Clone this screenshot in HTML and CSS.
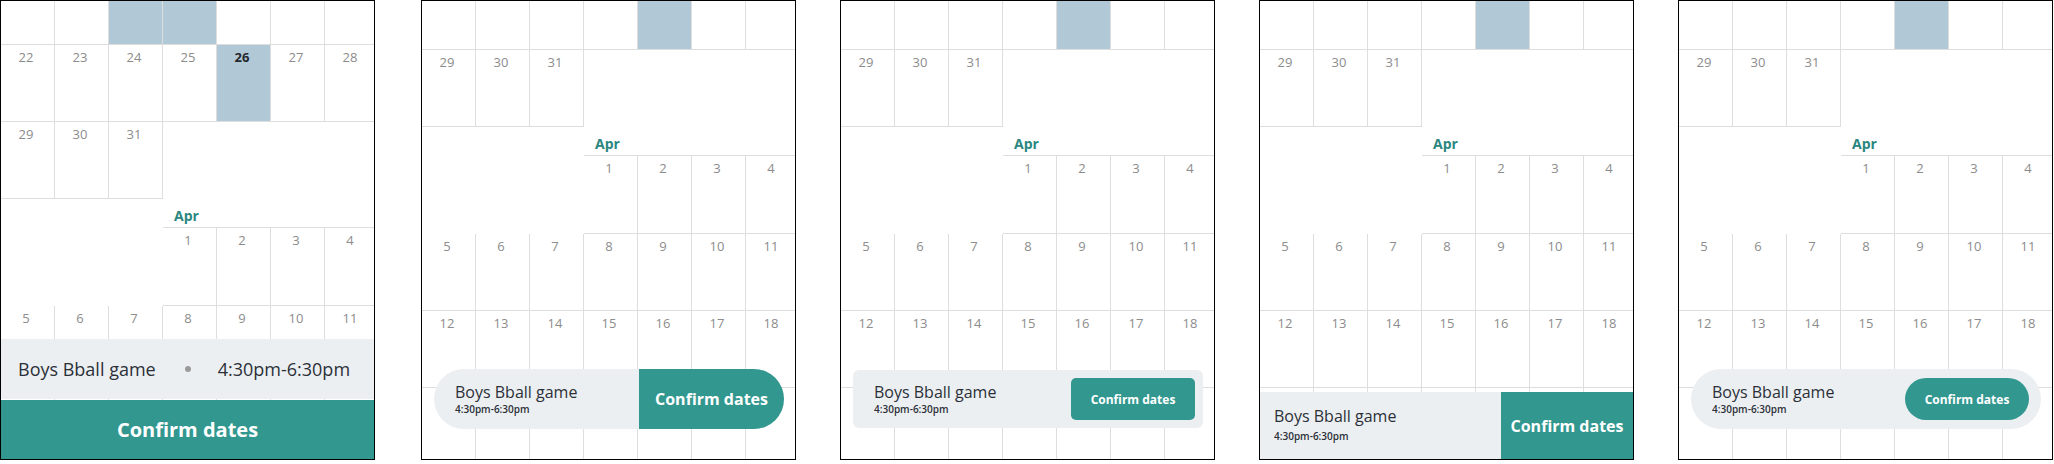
FILE: index.html
```html
<!DOCTYPE html>
<html lang="en">
<head>
<meta charset="utf-8">
<title>Confirm dates variants</title>
<link rel="stylesheet" href="styles.css">
</head>
<body>
<div class="board">

  <!-- Panel 1 -->
  <section class="panel panel--first">
    <div class="cal cal--deep">
      <div class="day"></div><div class="day"></div><div class="day day--sel"></div><div class="day day--sel"></div><div class="day"></div><div class="day"></div><div class="day"></div>
      <div class="day">22</div><div class="day">23</div><div class="day">24</div><div class="day">25</div><div class="day day--sel day--today">26</div><div class="day">27</div><div class="day">28</div>
      <div class="day">29</div><div class="day">30</div><div class="day">31</div><div></div><div></div><div></div><div></div>
      <div class="month-label">Apr</div>
      <div></div><div></div><div></div><div class="day day--first">1</div><div class="day day--first">2</div><div class="day day--first">3</div><div class="day day--first">4</div>
      <div class="day">5</div><div class="day">6</div><div class="day">7</div><div class="day">8</div><div class="day">9</div><div class="day">10</div><div class="day">11</div>
      <div class="day"></div><div class="day"></div><div class="day"></div><div class="day"></div><div class="day"></div><div class="day"></div><div class="day"></div>
    </div>
    <div class="stack">
      <div class="info-bar">
        <span class="info-name">Boys Bball game</span>
        <span class="info-dot"></span>
        <span class="info-time">4:30pm-6:30pm</span>
      </div>
      <div class="confirm-bar">Confirm dates</div>
    </div>
  </section>

  <!-- Panel 2 -->
  <section class="panel">
    <div class="cal cal--mid">
      <div class="day"></div><div class="day"></div><div class="day"></div><div class="day"></div><div class="day day--sel"></div><div class="day"></div><div class="day"></div>
      <div class="day">29</div><div class="day">30</div><div class="day">31</div><div></div><div></div><div></div><div></div>
      <div class="month-label">Apr</div>
      <div></div><div></div><div></div><div class="day day--first">1</div><div class="day day--first">2</div><div class="day day--first">3</div><div class="day day--first">4</div>
      <div class="day">5</div><div class="day">6</div><div class="day">7</div><div class="day">8</div><div class="day">9</div><div class="day">10</div><div class="day">11</div>
      <div class="day">12</div><div class="day">13</div><div class="day">14</div><div class="day">15</div><div class="day">16</div><div class="day">17</div><div class="day">18</div>
      <div class="day"></div><div class="day"></div><div class="day"></div><div class="day"></div><div class="day"></div><div class="day"></div><div class="day"></div>
    </div>
    <div class="card card--pill">
      <div class="event">
        <div class="event-name">Boys Bball game</div>
        <div class="event-time">4:30pm-6:30pm</div>
      </div>
      <div class="confirm-seg">Confirm dates</div>
    </div>
  </section>

  <!-- Panel 3 -->
  <section class="panel">
    <div class="cal cal--mid">
      <div class="day"></div><div class="day"></div><div class="day"></div><div class="day"></div><div class="day day--sel"></div><div class="day"></div><div class="day"></div>
      <div class="day">29</div><div class="day">30</div><div class="day">31</div><div></div><div></div><div></div><div></div>
      <div class="month-label">Apr</div>
      <div></div><div></div><div></div><div class="day day--first">1</div><div class="day day--first">2</div><div class="day day--first">3</div><div class="day day--first">4</div>
      <div class="day">5</div><div class="day">6</div><div class="day">7</div><div class="day">8</div><div class="day">9</div><div class="day">10</div><div class="day">11</div>
      <div class="day">12</div><div class="day">13</div><div class="day">14</div><div class="day">15</div><div class="day">16</div><div class="day">17</div><div class="day">18</div>
      <div class="day"></div><div class="day"></div><div class="day"></div><div class="day"></div><div class="day"></div><div class="day"></div><div class="day"></div>
    </div>
    <div class="card card--box">
      <div class="event">
        <div class="event-name">Boys Bball game</div>
        <div class="event-time">4:30pm-6:30pm</div>
      </div>
      <div class="btn btn--box">Confirm dates</div>
    </div>
  </section>

  <!-- Panel 4 -->
  <section class="panel">
    <div class="cal cal--mid">
      <div class="day"></div><div class="day"></div><div class="day"></div><div class="day"></div><div class="day day--sel"></div><div class="day"></div><div class="day"></div>
      <div class="day">29</div><div class="day">30</div><div class="day">31</div><div></div><div></div><div></div><div></div>
      <div class="month-label">Apr</div>
      <div></div><div></div><div></div><div class="day day--first">1</div><div class="day day--first">2</div><div class="day day--first">3</div><div class="day day--first">4</div>
      <div class="day">5</div><div class="day">6</div><div class="day">7</div><div class="day">8</div><div class="day">9</div><div class="day">10</div><div class="day">11</div>
      <div class="day">12</div><div class="day">13</div><div class="day">14</div><div class="day">15</div><div class="day">16</div><div class="day">17</div><div class="day">18</div>
      <div class="day"></div><div class="day"></div><div class="day"></div><div class="day"></div><div class="day"></div><div class="day"></div><div class="day"></div>
    </div>
    <div class="dock">
      <div class="event event--dock">
        <div class="event-name">Boys Bball game</div>
        <div class="event-time">4:30pm-6:30pm</div>
      </div>
      <div class="confirm-seg confirm-seg--dock">Confirm dates</div>
    </div>
  </section>

  <!-- Panel 5 -->
  <section class="panel">
    <div class="cal cal--mid">
      <div class="day"></div><div class="day"></div><div class="day"></div><div class="day"></div><div class="day day--sel"></div><div class="day"></div><div class="day"></div>
      <div class="day">29</div><div class="day">30</div><div class="day">31</div><div></div><div></div><div></div><div></div>
      <div class="month-label">Apr</div>
      <div></div><div></div><div></div><div class="day day--first">1</div><div class="day day--first">2</div><div class="day day--first">3</div><div class="day day--first">4</div>
      <div class="day">5</div><div class="day">6</div><div class="day">7</div><div class="day">8</div><div class="day">9</div><div class="day">10</div><div class="day">11</div>
      <div class="day">12</div><div class="day">13</div><div class="day">14</div><div class="day">15</div><div class="day">16</div><div class="day">17</div><div class="day">18</div>
      <div class="day"></div><div class="day"></div><div class="day"></div><div class="day"></div><div class="day"></div><div class="day"></div><div class="day"></div>
    </div>
    <div class="card card--round">
      <div class="event">
        <div class="event-name">Boys Bball game</div>
        <div class="event-time">4:30pm-6:30pm</div>
      </div>
      <div class="btn btn--round">Confirm dates</div>
    </div>
  </section>

</div>
</body>
</html>
```

FILE: styles.css
```css
* { box-sizing: border-box; }

html, body {
  margin: 0;
  padding: 0;
  background: #ffffff;
}

body {
  font-family: "Open Sans", "Noto Sans", sans-serif;
  color: #2b3038;
}

.board {
  display: flex;
  gap: 44px;
  align-items: flex-start;
}

.panel {
  position: relative;
  flex: 0 0 375px;
  width: 375px;
  height: 460px;
  border: 1px solid #000000;
  overflow: hidden;
  background: #ffffff;
}

.panel--first {
  margin-right: 2px;
}

/* calendar grid */
.cal {
  display: grid;
  grid-template-columns: repeat(7, 54px);
  width: 378px;
}

.cal--deep { margin-top: -33px; }
.cal--mid  { margin-top: -28px; }

.day {
  height: 77px;
  border-right: 1px solid #dedede;
  border-bottom: 1px solid #dedede;
  padding: 4px 3px 0 0;
  text-align: center;
  font-size: 13px;
  line-height: 16px;
  color: #8c8c8c;
}

.day--first {
  height: 79px;
  border-top: 1px solid #dedede;
}

.day--sel {
  background: #b1c9d7;
}

.day--today {
  font-weight: 700;
  color: #24272c;
}

.month-label {
  grid-column: 4 / -1;
  height: 28px;
  padding: 8px 0 0 11px;
  font-size: 14px;
  line-height: 18px;
  font-weight: 700;
  color: #2a8680;
}

/* shared event text */
.event {
  flex: 1;
  display: flex;
  flex-direction: column;
  justify-content: center;
  padding-left: 21px;
}

.event-name {
  font-size: 16px;
  line-height: 20px;
  color: #2b3038;
}

.event-time {
  font-size: 10px;
  line-height: 14px;
  font-weight: 600;
  color: #2b3038;
}

/* panel 1: stacked bars */
.stack {
  position: absolute;
  left: 0;
  right: 0;
  bottom: 0;
  display: flex;
  flex-direction: column;
  gap: 1px;
}

.info-bar {
  height: 60px;
  display: flex;
  align-items: center;
  padding-left: 17px;
  background: #eceff2;
  font-size: 18px;
  line-height: 24px;
  color: #2b3038;
}

.info-dot {
  width: 6px;
  height: 6px;
  border-radius: 50%;
  background: #9a9a9a;
  margin: 0 27px 0 29px;
}

.confirm-bar {
  height: 59px;
  display: flex;
  align-items: center;
  justify-content: center;
  background: #31978f;
  color: #ffffff;
  font-size: 20px;
  font-weight: 700;
}

/* floating cards */
.card {
  position: absolute;
  left: 12px;
  width: 350px;
  display: flex;
  align-items: center;
  background: #eceff2;
}

.card--pill {
  bottom: 30px;
  height: 60px;
  border-radius: 30px;
  overflow: hidden;
  align-items: stretch;
}

.card--box {
  bottom: 31px;
  height: 58px;
  border-radius: 6px;
  padding-right: 8px;
}

.card--round {
  bottom: 30px;
  height: 60px;
  border-radius: 30px;
  padding-right: 12px;
}

.confirm-seg {
  width: 145px;
  display: flex;
  align-items: center;
  justify-content: center;
  background: #31978f;
  color: #ffffff;
  font-size: 16px;
  font-weight: 700;
}

.btn {
  width: 124px;
  height: 42px;
  display: flex;
  align-items: center;
  justify-content: center;
  background: #31978f;
  color: #ffffff;
  font-size: 12px;
  font-weight: 700;
}

.btn--box { border-radius: 5px; }
.btn--round { border-radius: 21px; }

/* panel 4: docked bar */
.dock {
  position: absolute;
  left: 0;
  right: 0;
  bottom: 0;
  height: 67px;
  display: flex;
  background: #eceff2;
}

.event--dock {
  justify-content: flex-start;
  padding: 14px 0 0 14px;
}

.event--dock .event-time {
  margin-top: 3px;
}

.confirm-seg--dock {
  width: 132px;
}
```
